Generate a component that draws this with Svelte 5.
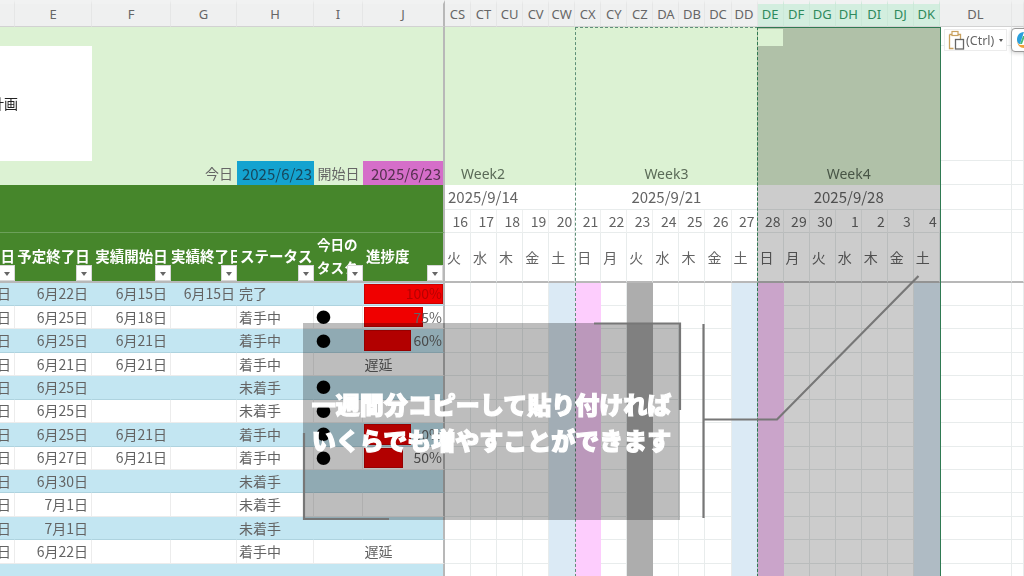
<script>
  const leftCols = ["", "E", "F", "G", "H", "I", "J"];
  const gantt = ["CS","CT","CU","CV","CW","CX","CY","CZ","DA","DB","DC","DD","DE","DF","DG","DH","DI","DJ","DK"];
  const days = [16,17,18,19,20,21,22,23,24,25,26,27,28,29,30,1,2,3,4];
  const weekdays = ["火","水","木","金","土","日","月","火","水","木","金","土","日","月","火","水","木","金","土"];
  const selected = new Set(["DE","DF","DG","DH","DI","DJ","DK"]);

  const headers = [
    { text: "日", cls: "right" },
    { text: "予定終了日", cls: "" },
    { text: "実績開始日", cls: "" },
    { text: "実績終了日", cls: "clip" },
    { text: "ステータス", cls: "left" },
    { text: "今日の<br>タスク", cls: "tall" },
    { text: "進捗度", cls: "left" },
  ];

  const rows = [
    { end: "6月22日", start: "6月15日", fin: "6月15日", st: "完了", pct: 100, w: 79 },
    { end: "6月25日", start: "6月18日", st: "着手中", dot: true, pct: 75, w: 59 },
    { end: "6月25日", start: "6月21日", st: "着手中", dot: true, pct: 60, w: 47 },
    { end: "6月21日", start: "6月21日", st: "着手中", late: true },
    { end: "6月25日", st: "未着手", dot: true },
    { end: "6月25日", st: "未着手", dot: true },
    { end: "6月25日", start: "6月21日", st: "着手中", dot: true, pct: 60, w: 47 },
    { end: "6月27日", start: "6月21日", st: "着手中", dot: true, pct: 50, w: 39 },
    { end: "6月30日", st: "未着手" },
    { end: "7月1日", st: "未着手" },
    { end: "7月1日", st: "未着手" },
    { end: "6月22日", st: "着手中", late: true },
    { },
  ];

  function ganttClass(i) {
    if (gantt[i] === "CW" || gantt[i] === "DD" || gantt[i] === "DK") return "sat";
    if (gantt[i] === "CX" || gantt[i] === "DE") return "sun";
    if (gantt[i] === "CZ") return "today";
    return "";
  }
</script>

<div class="sheet">
  <!-- column letters -->
  {#each leftCols as c, i}
    <div class="colhead" class:frz={i === 6}>{c}</div>
  {/each}
  {#each gantt as c}
    <div class="colhead" class:sel={selected.has(c)}>{c}</div>
  {/each}
  <div class="colhead">DL</div>
  <div class="colhead"></div>

  <!-- top band -->
  <div class="green frz" style="grid-column: span 7"></div>
  <div class="green" style="grid-column: span 12"></div>
  <div class="green"></div>
  <div class="green" style="grid-column: span 6"></div>
  <div class="blank"></div><div class="blank"></div>

  <div class="title"><span>計画</span></div>
  <div class="green frz" style="grid-column: span 5"></div>
  <div class="green" style="grid-column: span 19"></div>
  <div class="blank"></div><div class="blank"></div>

  <div class="green" style="grid-column: span 3"></div>
  <div class="green label right">今日</div>
  <div class="today-date">2025/6/23</div>
  <div class="green label">開始日</div>
  <div class="start-date frz">2025/6/23</div>
  <div class="green week wk2" style="grid-column: span 5">Week2</div>
  <div class="green week" style="grid-column: span 7">Week3</div>
  <div class="green week" style="grid-column: span 7">Week4</div>
  <div class="blank"></div><div class="blank"></div>

  <!-- date rows -->
  <div class="banner frz"></div>
  <div class="date wk2d" style="grid-column: span 5">2025/9/14</div>
  <div class="date" style="grid-column: span 7">2025/9/21</div>
  <div class="date" style="grid-column: span 7">2025/9/28</div>
  <div class="blank"></div><div class="blank"></div>

  {#each days as d}
    <div class="day">{d}</div>
  {/each}
  <div class="blank"></div><div class="blank"></div>

  <!-- table header -->
  {#each headers as h, i}
    <div class="th {h.cls}" class:frz={i === 6}>
      <span class="th-text">{@html h.text}</span>
      <span class="filter"></span>
    </div>
  {/each}
  {#each weekdays as w}
    <div class="wd">{w}</div>
  {/each}
  <div class="blank under"></div><div class="blank under"></div>

  <!-- task rows -->
  {#each rows as r, n}
    <div class="td right" class:blue={n % 2 === 0}>{r.st ? "日" : ""}</div>
    <div class="td right" class:blue={n % 2 === 0}>{r.end ?? ""}</div>
    <div class="td right pad" class:blue={n % 2 === 0}>{r.start ?? ""}</div>
    <div class="td right tight" class:blue={n % 2 === 0}>{r.fin ?? ""}</div>
    <div class="td st" class:blue={n % 2 === 0}>{r.st ?? ""}</div>
    {#if r.late}
      <div class="td late frz" class:blue={n % 2 === 0}>遅延</div>
    {:else}
      <div class="td dotcell" class:blue={n % 2 === 0}>{r.dot ? "●" : ""}</div>
      <div class="td prog frz" class:blue={n % 2 === 0}>
        {#if r.pct}
          <span class="bar" style="width: {r.w}px"></span>
          <span class="pct" class:full={r.pct === 100}>{r.pct}%</span>
        {/if}
      </div>
    {/if}
    {#each gantt as c, i}
      <div class="cell {ganttClass(i)}"></div>
    {/each}
    <div class="blank"></div><div class="blank"></div>
  {/each}

  <!-- copy range and selected range -->
  <div class="ants"></div>
  <div class="selection"></div>
  <div class="first-cell"></div>

  <!-- caption panel with the broken lines over the sheet -->
  <div class="shade">
    <p>一週間分コピーして貼り付ければ</p>
    <p>いくらでも増やすことができます</p>
  </div>
  <svg class="lines" width="1024" height="576" viewBox="0 0 1024 576">
    <path d="M594 323.500H680V410" />
    <path d="M304 433V519H389" />
    <path d="M703.500 324V518" />
    <path d="M704 419.500H777L918.500 276" />
  </svg>

  <!-- paste options -->
  <div class="paste">
    <svg width="17" height="20" viewBox="0 0 17 20">
      <path d="M1.500 4.500H12.500V9M5.500 18.500H1.500V4.500" fill="none" stroke="#c9a15f" stroke-width="1.300" />
      <rect x="4" y="1.500" width="6" height="4" fill="#fff" stroke="#c9a15f" stroke-width="1.200" />
      <rect x="7.500" y="9.500" width="8" height="9.500" fill="#fff" stroke="#666" stroke-width="1.300" />
    </svg>
    <span>(Ctrl)</span>
    <i class="caret"></i>
  </div>
  <div class="copilot">
    <svg width="16" height="18" viewBox="0 0 16 18">
      <path d="M8 1C3 1 1 5 1 9c0 2 1 4 3 4l3-9c.3-1 1-3 1-3z" fill="#2a9fdc" />
      <path d="M1 9c0 5 3 8 7 8 2 0 3-1 4-3H5C3 14 1 12 1 9z" fill="#f0a13a" />
      <path d="M4 13l3-8h2L6 13z" fill="#45b97c" />
      <path d="M8 1h5c2 0 3 3 3 6l-4 1-2-5C9.500 2 9 1 8 1z" fill="#d95aa5" />
    </svg>
  </div>
</div>

<style>
  :global(body) {
    margin: 0;
    overflow: hidden;
    background: #fff;
  }
  .sheet {
    position: relative;
    width: 1024px;
    height: 576px;
    overflow: hidden;
    display: grid;
    grid-template-columns: 15px 77px 79px 66px 77px 49px 82px repeat(19, 26.05px) 72px 1fr;
    grid-template-rows: 27px 18.500px 115.500px 24px 25px 22.500px 50px repeat(13, 23.45px);
    font-family: "Noto Sans CJK JP", "Noto Sans", sans-serif;
    font-size: 14px;
    color: #636363;
    filter: blur(0.4px);
  }
  .sheet > div {
    box-sizing: border-box;
    min-width: 0;
  }
  .colhead {
    background: #eff0f0;
    border-top: 4px solid #f1f2f2;
    border-right: 1px solid #e5e6e6;
    border-bottom: 1px solid #d2d2d2;
    font-family: "Noto Sans", sans-serif;
    font-size: 13px;
    color: #666;
    display: flex;
    align-items: center;
    justify-content: center;
    padding-bottom: 2px;
  }
  .colhead.sel {
    background: #d3eedf;
    color: #2f8a5c;
    border-right-color: #cbe8d8;
  }
  .green {
    background: #dcf2d3;
  }
  .blank {
    border-right: 1px solid #e8ecec;
    border-bottom: 1px solid #e8ecec;
  }
  .blank.under {
    border-bottom: 2px solid #b8b8b8;
  }
  .title {
    grid-column: span 2;
    background: #fff;
    color: #222;
    display: flex;
    align-items: center;
    overflow: hidden;
    padding-bottom: 1px;
  }
  .title span {
    margin-left: -10px;
    white-space: nowrap;
  }
  .label {
    display: flex;
    align-items: center;
    justify-content: center;
    color: #666;
  }
  .label.right {
    justify-content: flex-end;
    padding-right: 4px;
  }
  .today-date, .start-date {
    display: flex;
    align-items: center;
    justify-content: flex-end;
    padding-right: 2px;
    font-size: 15px;
  }
  .today-date {
    background: #14a3d0;
    color: #17475c;
  }
  .start-date {
    background: #d56ec9;
    color: #55304f;
  }
  .frz {
    border-right: 2px solid #b8b8b8;
  }
  .week {
    font-family: "Noto Sans", sans-serif;
    display: flex;
    align-items: center;
    justify-content: center;
    color: #5b6b58;
  }
  .week.wk2 {
    justify-content: flex-start;
    padding-left: 16px;
  }
  .banner {
    grid-column: span 7;
    grid-row: span 2;
    background: #46862b;
    border-bottom: 1px solid #6ca05a;
  }
  .date {
    display: flex;
    align-items: center;
    justify-content: center;
    border-bottom: 1px solid #e8ecec;
    font-size: 15px;
    padding-bottom: 2px;
  }
  .date.wk2d {
    justify-content: flex-start;
    padding-left: 3px;
  }
  .day {
    display: flex;
    align-items: center;
    justify-content: flex-end;
    padding-right: 2px;
    border-right: 1px solid #eef0f0;
    border-bottom: 1px solid #e8ecec;
  }
  .wd {
    display: flex;
    align-items: center;
    padding-left: 2px;
    border-right: 1px solid #e8ecec;
    border-bottom: 2px solid #b8b8b8;
  }
  .th {
    position: relative;
    background: #46862b;
    border-bottom: 2px solid #b8b8b8;
    color: #fff;
    font-weight: 700;
    font-size: 14.500px;
    display: flex;
    align-items: center;
    justify-content: center;
    white-space: nowrap;
    overflow: hidden;
    padding-bottom: 2px;
  }
  .th.left {
    justify-content: flex-start;
    padding-left: 3px;
  }
  .th.clip {
    justify-content: flex-start;
  }
  .th.right {
    justify-content: flex-end;
  }
  .th.tall {
    line-height: 23px;
    font-size: 13.500px;
    justify-content: flex-start;
    padding-left: 3px;
  }
  .filter {
    position: absolute;
    right: 0;
    bottom: 0;
    width: 16px;
    height: 16px;
    background: #fff;
    border: 1px solid #d8d8d8;
    box-sizing: border-box;
  }
  .filter::after {
    content: "";
    position: absolute;
    left: 4px;
    top: 6px;
    border: 3.500px solid transparent;
    border-top: 4px solid #666;
    border-bottom: 0;
  }
  .td {
    display: flex;
    align-items: center;
    white-space: nowrap;
    overflow: hidden;
    position: relative;
    border-right: 1px solid #ececec;
    border-bottom: 1px solid #ececec;
    padding-bottom: 1px;
  }
  .td.blue {
    background: #c3e6f2;
    border-right-color: #c3e6f2;
    border-bottom-color: #aed3df;
  }
  .td.right {
    justify-content: flex-end;
    padding-right: 3px;
  }
  .td.tight {
    padding-right: 1px;
  }
  .td.st {
    padding-left: 2px;
  }
  .td.late {
    grid-column: span 2;
    justify-content: center;
  }
  .td.frz {
    border-right: 2px solid #b8b8b8;
  }
  .dotcell {
    color: #000;
    font-size: 15px;
    padding-left: 2px;
  }
  .prog {
    justify-content: flex-end;
    padding-right: 1px;
  }
  .bar {
    position: absolute;
    left: 1px;
    top: 1px;
    bottom: 1px;
    background: #f00000;
    box-shadow: inset 0 0 0 1px rgba(120, 0, 0, 0.3);
  }
  .pct {
    position: relative;
  }
  .pct.full {
    color: #b80000;
  }
  .cell {
    border-right: 1px solid #e8ecec;
    border-bottom: 1px solid #e8ecec;
  }
  .cell.sat {
    background: #dbeaf5;
    border-color: #dbeaf5;
  }
  .cell.sun {
    background: #fdcdfd;
    border-color: #fdcdfd;
  }
  .cell.today {
    background: #adadad;
    border-color: #adadad;
  }
  .ants {
    position: absolute;
    left: 574.500px;
    top: 27px;
    width: 183px;
    height: 560px;
    box-sizing: border-box;
    border: 1px dashed #5f9078;
  }
  .selection {
    position: absolute;
    left: 756.500px;
    top: 27px;
    width: 184px;
    height: 560px;
    box-sizing: border-box;
    background: rgba(0, 0, 0, 0.2);
    border: 1.500px solid #2f7a52;
    border-left: 1px dashed #2f7a52;
  }
  .first-cell {
    position: absolute;
    left: 757.500px;
    top: 28.500px;
    width: 25px;
    height: 17px;
    background: #dcf2d3;
  }
  .shade {
    position: absolute;
    left: 303px;
    top: 323px;
    width: 377px;
    height: 197px;
    background: rgba(0, 0, 0, 0.26);
    display: flex;
    flex-direction: column;
    align-items: center;
    padding-top: 63px;
    box-sizing: border-box;
    color: #fff;
    font-size: 24px;
    font-weight: 900;
    line-height: 36px;
    -webkit-text-stroke: 1.200px #fff;
  }
  .shade p {
    margin: 0;
    white-space: nowrap;
  }
  .lines {
    position: absolute;
    left: 0;
    top: 0;
    pointer-events: none;
  }
  .lines path {
    fill: none;
    stroke: #777;
    stroke-width: 2.200px;
  }
  .paste {
    position: absolute;
    left: 944px;
    top: 29px;
    width: 63px;
    height: 22px;
    box-sizing: border-box;
    background: #fff;
    border: 1px solid #ececec;
    display: flex;
    align-items: center;
    gap: 1px;
    padding-left: 3px;
    font-family: "Noto Sans", sans-serif;
    font-size: 12.500px;
    color: #666;
  }
  .caret {
    margin-left: 4px;
    border: 2.500px solid transparent;
    border-top: 3px solid #555;
    border-bottom: 0;
  }
  .copilot {
    position: absolute;
    left: 1011px;
    top: 28px;
    width: 30px;
    height: 24px;
    box-sizing: border-box;
    background: #fff;
    border: 1px solid #999;
    border-radius: 4px;
    box-shadow: 0 1px 4px rgba(0, 0, 0, 0.2);
    padding: 2px 0 0 4px;
  }
</style>
